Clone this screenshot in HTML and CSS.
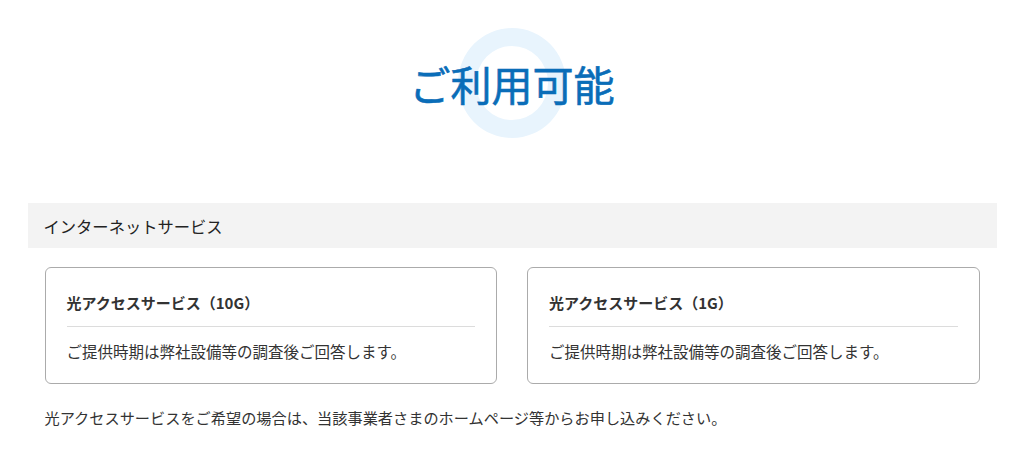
FILE: index.html
```html
<!DOCTYPE html>
<html lang="ja">
<head>
<meta charset="utf-8">
<title>ご利用可能</title>
<link rel="stylesheet" href="styles.css">
</head>
<body>
<div class="page">
  <div class="hero">
    <div class="hero-mark">
      <h1 class="hero-title">ご利用可能</h1>
    </div>
  </div>
  <div class="section-bar">インターネットサービス</div>
  <div class="cards">
    <div class="card">
      <div class="card-title">光アクセスサービス（10G）</div>
      <div class="card-body">ご提供時期は弊社設備等の調査後ご回答します。</div>
    </div>
    <div class="card">
      <div class="card-title">光アクセスサービス（1G）</div>
      <div class="card-body">ご提供時期は弊社設備等の調査後ご回答します。</div>
    </div>
  </div>
  <p class="note">光アクセスサービスをご希望の場合は、当該事業者さまのホームページ等からお申し込みください。</p>
</div>
</body>
</html>
```
FILE: styles.css
```css
*, *::before, *::after { box-sizing: border-box; }
html, body { margin: 0; padding: 0; background: #fff; }
body {
  font-family: "Noto Sans CJK JP", "Noto Sans", sans-serif;
  color: #333;
}
.page {
  width: 969px;
  margin: 0 auto;
}
.hero {
  padding-top: 28px;
  display: flex;
  justify-content: center;
  height: 203px;
}
.hero-mark {
  position: relative;
  width: 108px;
  height: 110px;
  display: flex;
  align-items: center;
  justify-content: center;
}
.hero-mark::before {
  content: "";
  position: absolute;
  left: 0; top: 0;
  width: 108px; height: 110px;
  border-radius: 50%;
  border: 18px solid #e8f4fd;
}
.hero-title {
  position: relative;
  margin: 0;
  font-size: 41px;
  font-weight: 400;
  line-height: 1;
  color: #0a6db8;
  white-space: nowrap;
  padding-top: 1px;
  -webkit-text-stroke: 0.6px #0a6db8;
}
.section-bar {
  background: #f3f3f3;
  height: 45px;
  display: flex;
  align-items: center;
  padding-left: 16px;
  font-size: 16.3px;
  font-weight: 400;
  color: #222;
}
.cards {
  margin-top: 19px;
  padding: 0 17px;
  display: grid;
  grid-template-columns: 1fr 1fr;
  gap: 30px;
}
.card {
  border: 1px solid #ababab;
  border-radius: 6px;
  padding: 24px 21px 21px;
}
.card-title {
  font-size: 15px;
  font-weight: 700;
  line-height: 22px;
  padding-bottom: 12px;
  border-bottom: 1px solid #dcdcdc;
}
.card-body {
  font-size: 15.5px;
  line-height: 22px;
  margin-top: 13px;
}
.note {
  margin: 22px 0 0;
  padding-left: 17px;
  font-size: 15.2px;
  line-height: 22px;
}
```
